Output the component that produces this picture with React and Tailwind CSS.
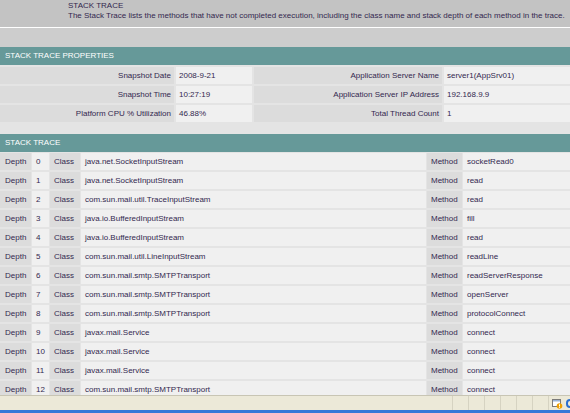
const props = [
  ["Snapshot Date", "2008-9-21", "Application Server Name", "server1(AppSrv01)"],
  ["Snapshot Time", "10:27:19", "Application Server IP Address", "192.168.9.9"],
  ["Platform CPU % Utilization", "46.88%", "Total Thread Count", "1"],
]

const frames = [
  [0, "java.net.SocketInputStream", "socketRead0"],
  [1, "java.net.SocketInputStream", "read"],
  [2, "com.sun.mail.util.TraceInputStream", "read"],
  [3, "java.io.BufferedInputStream", "fill"],
  [4, "java.io.BufferedInputStream", "read"],
  [5, "com.sun.mail.util.LineInputStream", "readLine"],
  [6, "com.sun.mail.smtp.SMTPTransport", "readServerResponse"],
  [7, "com.sun.mail.smtp.SMTPTransport", "openServer"],
  [8, "com.sun.mail.smtp.SMTPTransport", "protocolConnect"],
  [9, "javax.mail.Service", "connect"],
  [10, "javax.mail.Service", "connect"],
  [11, "javax.mail.Service", "connect"],
  [12, "com.sun.mail.smtp.SMTPTransport", "connect"],
]

const SectionHeader = ({ title }) => (
  <div className="h-[18px] bg-[#669999] text-white pl-[5px] flex items-center whitespace-nowrap">
    {title}
  </div>
)

const App = () => {
  return (
    <div className="w-[570px] h-[413px] flex flex-col overflow-hidden bg-[#cccccc] text-[8px] text-[#33284f] font-['Liberation_Sans',Arial,sans-serif]">
      <div className="flex-1 overflow-hidden flex flex-col">
        <div className="h-[27px] shrink-0 bg-[#c3c3c3] pl-[68px] pt-[1px] leading-[10px] whitespace-nowrap">
          <div>STACK TRACE</div>
          <div>The Stack Trace lists the methods that have not completed execution, including the class name and stack depth of each method in the trace.</div>
        </div>
        <div className="h-px shrink-0 bg-white" />
        <div className="h-[19px] shrink-0 bg-[#cdcdcd]" />

        <div className="bg-[#e4e4e4] flex-1">
          <SectionHeader title="STACK TRACE PROPERTIES" />
          <div className="grid grid-cols-[174px_76px_188px_126px] gap-x-[2px] gap-y-[2px] pt-[2px]">
            {props.map(([l1, v1, l2, v2]) => (
              <div key={l1} className="contents">
                <div className="h-[17px] bg-[#dcdcdc] flex items-center justify-end pr-[3px] whitespace-nowrap">{l1}</div>
                <div className="h-[17px] bg-[#f0f0f0] flex items-center pl-[3px] whitespace-nowrap">{v1}</div>
                <div className="h-[17px] bg-[#dcdcdc] flex items-center justify-end pr-[3px] whitespace-nowrap">{l2}</div>
                <div className="h-[17px] bg-[#f0f0f0] flex items-center pl-[3px] whitespace-nowrap">{v2}</div>
              </div>
            ))}
          </div>
          <div className="h-[12px]" />

          <SectionHeader title="STACK TRACE" />
          <div className="grid grid-cols-[31px_17px_30px_345px_35px_107px] gap-x-px gap-y-[2px] pt-px">
            {frames.map(([d, cls, m]) => (
              <div key={d} className="contents">
                <div className="h-[17px] bg-[#dcdcdc] flex items-center pl-[5px]">Depth</div>
                <div className="h-[17px] bg-[#f0f0f0] flex items-center pl-[4px]">{d}</div>
                <div className="h-[17px] bg-[#dcdcdc] flex items-center pl-[4px]">Class</div>
                <div className="h-[17px] bg-[#f0f0f0] flex items-center pl-[4px] whitespace-nowrap">{cls}</div>
                <div className="h-[17px] bg-[#dcdcdc] flex items-center pl-[4px]">Method</div>
                <div className="h-[17px] bg-[#f0f0f0] flex items-center pl-[4px] whitespace-nowrap">{m}</div>
              </div>
            ))}
          </div>
        </div>
      </div>

      <div className="h-[15px] shrink-0 bg-[#ece9d8] border-t border-[#c8c5b4] flex justify-end items-stretch">
        {[0, 1, 2, 3, 4, 5].map((i) => (
          <div key={i} className="w-[16px] border-l border-[#d6d3c2]" />
        ))}
        <div className="w-[18px] border-l border-[#d6d3c2] flex items-center justify-center">
          <svg width="11" height="11" viewBox="0 0 11 11">
            <rect x="0.5" y="1.5" width="8" height="7" fill="#fff" stroke="#7a7a7a" />
            <rect x="1" y="2" width="7" height="1.5" fill="#9bb4d8" />
            <circle cx="7.5" cy="8" r="2.8" fill="#f0a000" />
            <rect x="7" y="6.3" width="1" height="2.2" fill="#fff" />
            <rect x="7" y="9" width="1" height="0.8" fill="#fff" />
          </svg>
        </div>
        <div className="w-[4px] flex items-center overflow-hidden">
          <div className="w-[8px] h-[9px] rounded-full border-2 border-[#2a6fd0] shrink-0" />
        </div>
      </div>
      <div className="h-[3px] shrink-0 bg-[#3a78d8]" />
    </div>
  )
}

export default App
